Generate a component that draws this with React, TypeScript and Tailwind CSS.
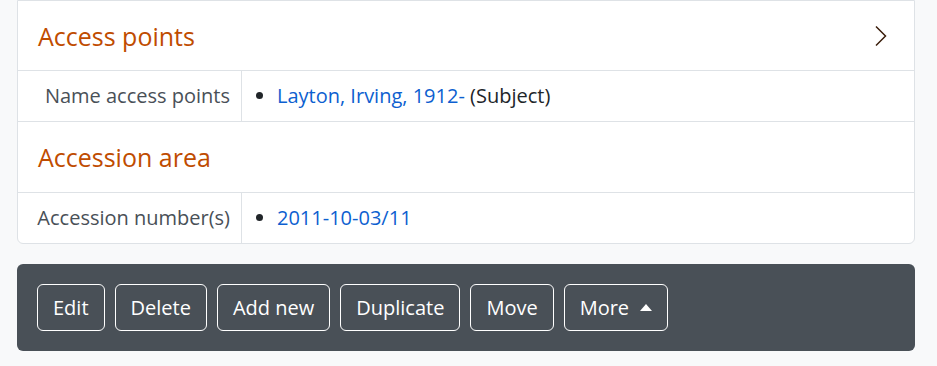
const FONT = { fontFamily: '"Open Sans", "Noto Sans", sans-serif' };

function FieldRow({ label, children }: { label: string; children: React.ReactNode }) {
  return (
    <div className="flex border-b border-[#dee2e6] last:border-b-0">
      <div className="w-[224px] shrink-0 border-r border-[#dee2e6] px-[11px] py-[12px] text-right text-[20px] leading-[26px] text-[#495057]">
        {label}
      </div>
      <div className="flex-1 py-[12px] pl-[15px] text-[20px] leading-[26px] text-[#212529]">
        <ul className="list-disc pl-[20px]">{children}</ul>
      </div>
    </div>
  );
}

function SectionHeader({ title, chevron, h }: { title: string; chevron?: boolean; h: string }) {
  return (
    <div className={`flex ${h} items-center justify-between border-b border-[#dee2e6] pl-[20px] pr-[26px]`}>
      <h2 className="pt-[2px] text-[25px] text-[#bf4c00]">{title}</h2>
      {chevron && (
        <svg width="14" height="22" viewBox="0 0 14 22" fill="none">
          <path d="M2 1.5 L11.5 11 L2 20.5" stroke="#3b1e0c" strokeWidth="1.5" />
        </svg>
      )}
    </div>
  );
}

export default function App() {
  const actions = ['Edit', 'Delete', 'Add new', 'Duplicate', 'Move'];
  return (
    <div className="min-h-[366px] bg-[#f8f9fa] pl-[17px] pr-[22px]" style={FONT}>
      <div className="rounded-b-[6px] border border-[#dee2e6] bg-white">
        <SectionHeader title="Access points" chevron h="h-[70px]" />
        <FieldRow label="Name access points">
          <li>
            <a className="text-[#0d5fd0]">Layton, Irving, 1912-</a> (Subject)
          </li>
        </FieldRow>
        <SectionHeader title="Accession area" h="h-[71px]" />
        <FieldRow label="Accession number(s)">
          <li>
            <a className="text-[#0d5fd0]">2011-10-03/11</a>
          </li>
        </FieldRow>
      </div>
      <div className="mt-[20px] flex gap-[10px] rounded-[6px] bg-[#495057] px-[20px] py-[20px]">
        {actions.map((a) => (
          <button
            key={a}
            className="h-[47px] rounded-[6px] border border-white px-[15px] text-[20px] text-white"
          >
            {a}
          </button>
        ))}
        <button className="flex h-[47px] items-center gap-[11px] rounded-[6px] border border-white px-[15px] text-[20px] text-white">
          More
          <svg width="12" height="7" viewBox="0 0 12 7">
            <path d="M0 7 L6 0 L12 7 Z" fill="white" />
          </svg>
        </button>
      </div>
    </div>
  );
}
